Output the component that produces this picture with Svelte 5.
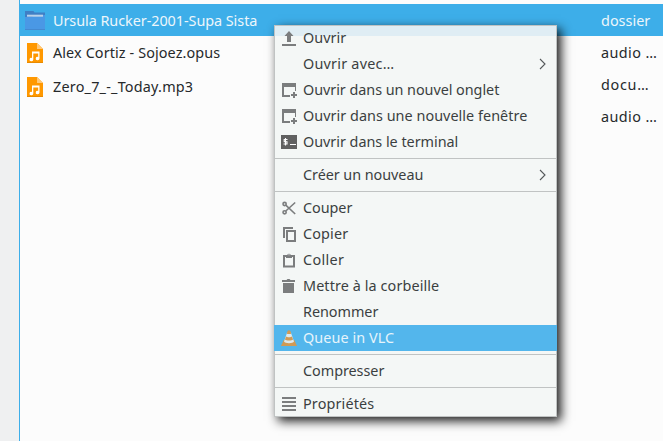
<script>
  const files = [
    { name: 'Ursula Rucker-2001-Supa Sista', w: 204, folder: true },
    { name: 'Alex Cortiz - Sojoez.opus', w: 167 },
    { name: 'Zero_7_-_Today.mp3', w: 140 }
  ];
  const types = [
    { name: 'dossier', w: 49 },
    { name: 'audio …', w: 56 },
    { name: 'docu…', w: 48 },
    { name: 'audio …', w: 56 }
  ];
  const menu = [
    { label: 'Ouvrir', w: 43, icon: 'open' },
    { label: 'Ouvrir avec…', w: 91, sub: true },
    { label: 'Ouvrir dans un nouvel onglet', w: 196, icon: 'window' },
    { label: 'Ouvrir dans une nouvelle fenêtre', w: 224, icon: 'window' },
    { label: 'Ouvrir dans le terminal', w: 155, icon: 'terminal' },
    null,
    { label: 'Créer un nouveau', w: 120, sub: true },
    null,
    { label: 'Couper', w: 49, icon: 'cut' },
    { label: 'Copier', w: 45, icon: 'copy' },
    { label: 'Coller', w: 41, icon: 'paste' },
    { label: 'Mettre à la corbeille', w: 136, icon: 'trash' },
    { label: 'Renommer', w: 75 },
    { label: 'Queue in VLC', w: 91, icon: 'vlc', active: true },
    null,
    { label: 'Compresser', w: 81 },
    null,
    { label: 'Propriétés', w: 71, icon: 'list' }
  ];

  // Spreads the letters so that the label takes the given width.
  function fit(node, width) {
    const natural = node.getBoundingClientRect().width;
    node.style.letterSpacing = (width + 0.3 - natural) / [...node.textContent].length + 'px';
  }
</script>

<div class="window">
  <div class="sidebar"></div>
  <div class="view">
    <div class="selection"></div>
    <div class="names">
      {#each files as f}
        <div class="file" class:selected={f.folder}>
          {#if f.folder}
            <svg class="ficon" width="20" height="20" viewBox="0 0 20 20">
              <path fill="#3f7fc5" d="M0 1h8.500l1 1.500H20V10H0z" />
              <path fill="#4a98e5" d="M0 7h7l2-2h11v14H0z" />
              <path fill="#b9d2ea" d="M2 4.700h16v2H2z" />
              <path fill="#4389d1" d="M0 19h20v1H0z" />
            </svg>
          {:else}
            <svg class="ficon" width="20" height="20" viewBox="0 0 20 20">
              <path fill="#ff9800" d="M2 0h10l6 6v14H2z" />
              <path fill="#ffc878" d="M12 0l6 6h-6z" />
              <path fill="#df8500" d="M2 19.300h16v.7H2z" />
              <path fill="#fff" d="M7 8.500h7.500v7a1.900 1.700 0 1 1-1.300-1.600V10.500H8.300v6a1.900 1.700 0 1 1-1.300-1.600z" />
            </svg>
          {/if}
          <span use:fit={f.w}>{f.name}</span>
        </div>
      {/each}
    </div>
    <div class="types">
      {#each types as t, i}
        <div class="type" class:selected={i === 0}><span use:fit={t.w}>{t.name}</span></div>
      {/each}
    </div>
  </div>

  <div class="menu">
    {#each menu as m}
      {#if m}
        <div class="item" class:active={m.active}>
          <span class="slot">
            {#if m.icon}
              <svg width="16" height="16" viewBox="0 0 16 16" fill="#7b7d7e">
                {#if m.icon === 'open'}
                  <path d="M8 1l4.500 5H10v6H6V6H3.500zM1 14h14v2H1z" />
                {:else if m.icon === 'window'}
                  <path d="M1 1h14v8h-1V5H3v8h6v2H1zM12 10h2v2h2v2h-2v2h-2v-2h-2v-2h2z" />
                {:else if m.icon === 'terminal'}
                  <path fill="#616161" d="M0 1h16v14H0z" />
                  <path fill="none" stroke="#fff" stroke-width="1.1" d="M6.500 5.500H3.200V7.700H6V10H2.500M4.500 4v7.500M9 10.500h6" />
                {:else if m.icon === 'cut'}
                  <g fill="none" stroke="#7b7d7e" stroke-width="1.6">
                    <circle cx="3.600" cy="4" r="1.600" /><circle cx="3.600" cy="12.300" r="1.600" />
                    <path d="M4.800 5.200L14.200 14M4.800 11L14.200 2.500" />
                  </g>
                {:else if m.icon === 'copy'}
                  <path d="M2 1h10v2H4v9H2zM5 4h10v12H5zM7 6v8h6V6z" fill-rule="evenodd" />
                {:else if m.icon === 'paste'}
                  <path d="M2 3h3v2h6V3h3v12.500H2zM4 5v8.500h8V5z" fill-rule="evenodd" />
                  <path d="M5 3h1.200a1.900 1.900 0 0 1 3.600 0H11v3H5zM7.500 2.200v1h1v-1z" fill-rule="evenodd" />
                {:else if m.icon === 'trash'}
                  <path d="M1 2h4.500l1-1h2l1 1H14v2H1zM2 5h11v10H2z" />
                {:else if m.icon === 'vlc'}
                  <path fill="#d09a55" d="M2.700 10h10.600L16 16H0z" />
                  <path fill="#dce9ee" d="M6.300 2h3.400l3.300 9.500c-1 2.300-9 2.300-10 0z" />
                  <path fill="#d09a55" d="M6.600 1c.3-1 2.500-1 2.800 0l.8 2.500c-.5.700-3.900.7-4.400 0zM5 6.500c1 1 5 1 6 0l1 3c-1.200 1.400-6.800 1.400-8 0z" />
                {:else}
                  <path d="M1 1h14v2H1zM1 5h14v2H1zM1 9h14v2H1zM1 13h14v2H1z" />
                {/if}
              </svg>
            {/if}
          </span>
          <span class="label"><span use:fit={m.w}>{m.label}</span></span>
          {#if m.sub}
            <svg class="arrow" width="8" height="12" viewBox="0 0 8 12">
              <path fill="none" stroke="#55595b" stroke-width="1.1" d="M1 1l5 5-5 5" />
            </svg>
          {/if}
        </div>
      {:else}
        <div class="sep"></div>
      {/if}
    {/each}
  </div>
</div>

<style>
  .window {
    position: relative;
    display: flex;
    width: 663px;
    height: 441px;
    overflow: hidden;
    background: #fcfcfc;
    color: #26292b;
    font: 14.4px/20px 'Noto Sans', 'Open Sans', sans-serif;
    white-space: pre;
  }
  .sidebar {
    width: 19px;
    background: #eff0f1;
    border-right: 1px solid #3daee9;
  }
  .view {
    position: relative;
    display: flex;
    flex: 1;
    justify-content: space-between;
    padding-top: 4px;
  }
  .selection {
    position: absolute;
    top: 4px;
    left: 0;
    right: 0;
    height: 32px;
    background: #3daee9;
  }
  .names, .types { position: relative; }
  .file {
    display: flex;
    align-items: center;
    gap: 8px;
    height: 34px;
    padding-left: 5px;
  }
  .file.selected { height: 32px; }
  .file.selected span { padding-top: 2px; }
  .types { width: 62px; }
  .type {
    display: flex;
    align-items: center;
    height: 30px;
    padding-top: 2px;
  }
  .selected { color: #edf6fb; }
  .menu {
    position: absolute;
    left: 274px;
    top: 25px;
    width: 283px;
    height: 392px;
    background: linear-gradient(#dfedf4 11px, #f4f7f6 11px);
    box-shadow: inset 0 0 0 1px #c0c3c3, 4px 4px 10px rgba(0, 0, 0, 0.9);
    color: #3b3f41;
  }
  .item {
    display: flex;
    align-items: center;
    height: 26px;
    padding: 0 10px 0 7px;
  }
  .item.active {
    background: #53b6ec;
    color: #e6f4fb;
  }
  .slot {
    width: 16px;
    height: 16px;
    margin-right: 6px;
  }
  .label { flex: 1; }
  svg { display: block; flex: none; }
  .sep {
    height: 1px;
    margin: 3px 1px;
    background: #c0c3c3;
  }
</style>
